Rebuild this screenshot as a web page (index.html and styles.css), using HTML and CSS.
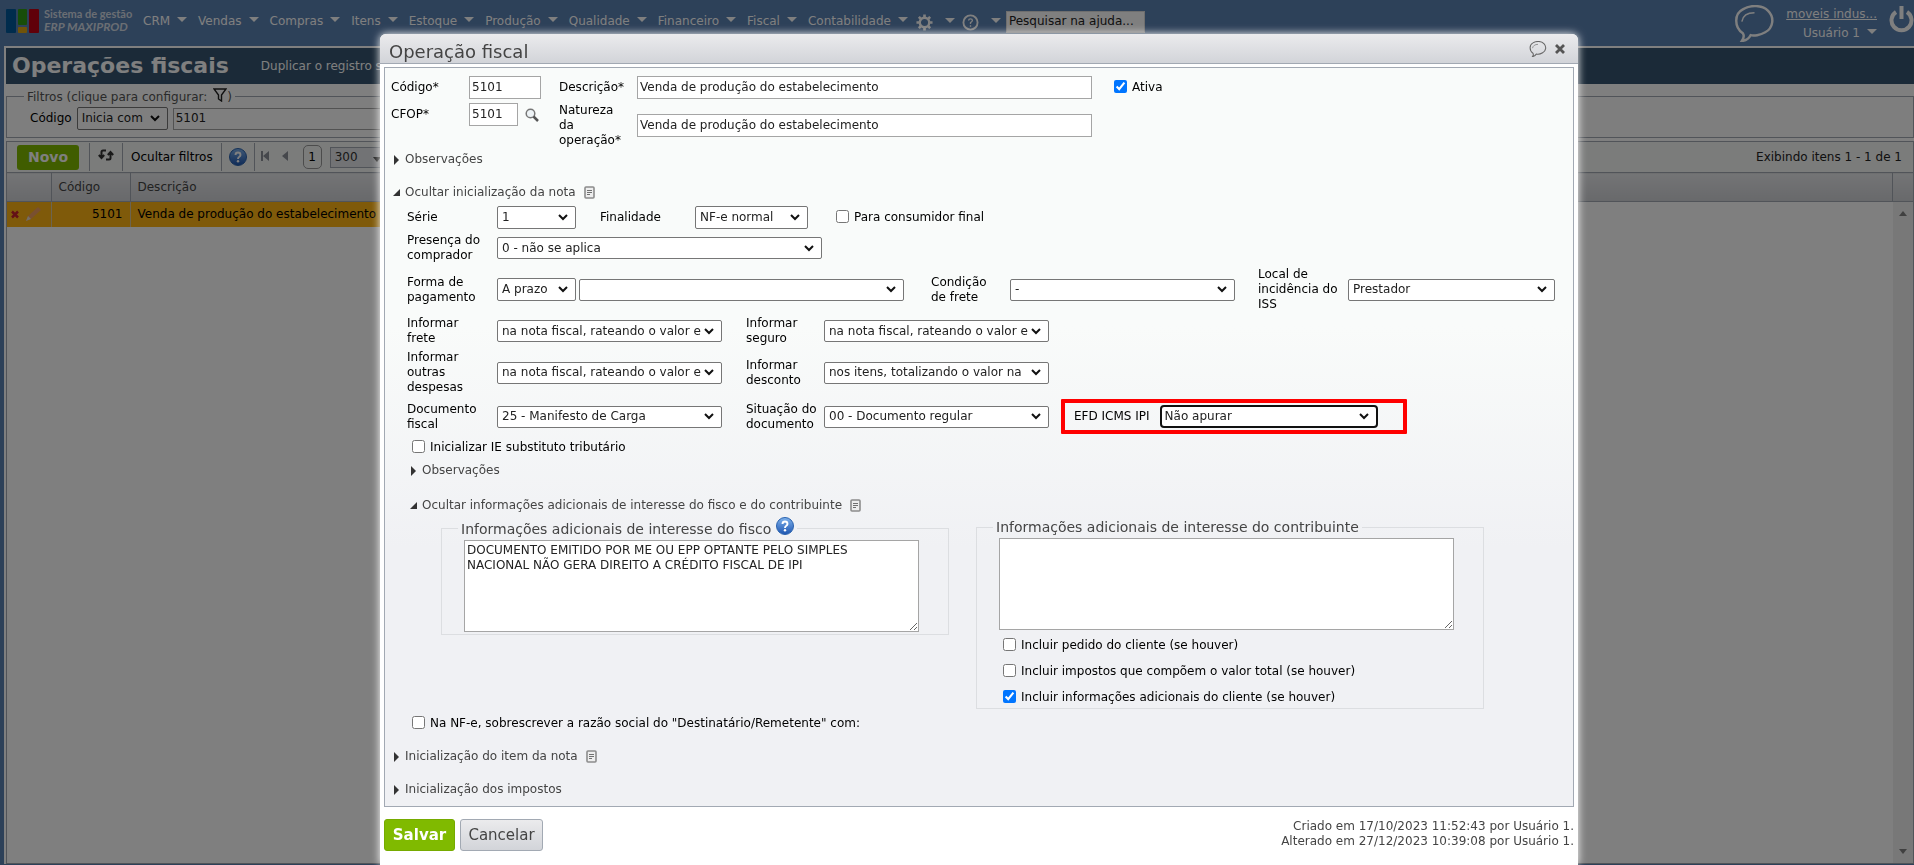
FILE: index.html
```html
<!DOCTYPE html>
<html lang="pt-BR">
<head>
    <meta charset="UTF-8">
    <meta name="viewport" content="width=device-width, initial-scale=1.0">
    <title>Operações fiscais</title>
    <link rel="stylesheet" href="styles.css">
</head>
<body>

    <svg width="0" height="0" class="sprite">
        <symbol id="note" viewBox="0 0 11 13">
            <rect x="1" y="1" width="9" height="11" rx="1" fill="#eee" stroke="#8c8c8c" stroke-width="1.6"/>
            <path d="M3 4.500h5M3 6.500h5M3 8.500h3" stroke="#707070"/>
        </symbol>
        <symbol id="bubble" viewBox="0 0 40 38">
            <path d="M8 29C-1 23-1 9 8 4.500C16-.5 28 0 34 6C41 13 39 24 31 28C26 31 19 32 16 31C14 35 11 36.500 7 37C9 34 9.500 31 8 29Z" fill="none" stroke="currentColor" stroke-width="2.500"/>
            <path d="M7 17C8 11 13 8 20 8" fill="none" stroke="currentColor" stroke-width="1.500"/>
        </symbol>
        <symbol id="help" viewBox="0 0 18 18">
            <circle cx="9" cy="9" r="8.500" fill="url(#ball)" stroke="#2a62ae"/>
            <path d="M6.500 7Q6.500 4.500 9 4.500T11.500 7Q11.500 8 10 9Q9 9.600 9 11" fill="none" stroke="#fff" stroke-width="1.900"/>
            <circle cx="9" cy="13.300" r="1.200" fill="#fff"/>
        </symbol>
        <linearGradient id="ball" x1="0" y1="0" x2="0" y2="1">
            <stop offset="0" stop-color="#7fb2ec"/>
            <stop offset="1" stop-color="#1d55b0"/>
        </linearGradient>
    </svg>

    <header class="navbar">
        <svg class="logo" width="34" height="26" viewBox="0 0 34 26">
            <rect x="0" y="1" width="10" height="24" rx="1" fill="#00589a"/>
            <rect x="12" y="1" width="9" height="16" rx="1" fill="#2f9a12"/>
            <rect x="12" y="19" width="9" height="6" rx="1" fill="#e0a612"/>
            <rect x="23" y="1" width="10" height="24" rx="1" fill="#c00012"/>
        </svg>
        <div class="brand">Sistema de gestão<br><em>ERP MAXIPROD</em></div>
        <nav class="menu">
            <a href="#">CRM</a>
            <a href="#">Vendas</a>
            <a href="#">Compras</a>
            <a href="#">Itens</a>
            <a href="#">Estoque</a>
            <a href="#">Produção</a>
            <a href="#">Qualidade</a>
            <a href="#">Financeiro</a>
            <a href="#">Fiscal</a>
            <a href="#">Contabilidade</a>
            <a href="#" class="icon" aria-label="Configurações">
                <svg width="17" height="17" viewBox="0 0 18 18" fill="none" stroke="currentColor">
                    <circle cx="9" cy="9" r="5" stroke-width="2.500"/>
                    <path d="M9 .5v3M9 14.500v3M.5 9h3M14.500 9h3M3 3l2 2M13 13l2 2M15 3l-2 2M5 13l-2 2" stroke-width="2.800"/>
                </svg>
            </a>
            <a href="#" class="icon" aria-label="Ajuda">
                <svg width="17" height="17" viewBox="0 0 18 18" fill="none" stroke="currentColor">
                    <circle cx="9" cy="9" r="7.500" stroke-width="2"/>
                    <path d="M7 7Q7 5.200 9 5.200T11 7Q11 8 9 9.200V10.500M9 12v1.500" stroke-width="1.400"/>
                </svg>
            </a>
        </nav>
        <input class="search" type="text" value="Pesquisar na ajuda..." aria-label="Pesquisar na ajuda">
        <div class="account">
            <svg width="39" height="37"><use href="#bubble"/></svg>
            <div class="user">
                <a href="#" class="company">moveis indus...</a>
                <a href="#" class="name">Usuário 1</a>
            </div>
            <svg width="25" height="28" viewBox="0 0 25 28" fill="none" stroke="currentColor" stroke-width="4">
                <path d="M7 7A10 10 0 1 0 18 7M12.500 1V14"/>
            </svg>
        </div>
    </header>

    <main class="page">
        <div class="titlebar">
            <h1>Operações fiscais</h1>
            <a href="#">Duplicar o registro selecionado</a>
        </div>

        <fieldset class="filters">
            <legend>Filtros (clique para configurar:
                <svg width="14" height="14" viewBox="0 0 14 14"><path d="M1 1h12L8.500 7v6L5.500 11V7Z" fill="none" stroke="#222" stroke-width="1.400"/></svg>)
            </legend>
            <label for="filter-op">Código</label>
            <select id="filter-op"><option>Inicia com</option></select>
            <input type="text" value="5101" aria-label="Código">
        </fieldset>

        <section class="list">
            <div class="toolbar">
                <button type="button" class="new">Novo</button>
                <button type="button" class="tool" aria-label="Atualizar">
                    <svg width="16" height="12" viewBox="0 0 16 12" fill="none" stroke="#333" stroke-width="2">
                        <path d="M8 1.500H5Q3.500 1.500 3.500 3V9M8 10.500H11Q12.500 10.500 12.500 9V3M.8 6L3.500 9L6.200 6M9.800 6L12.500 3L15.200 6"/>
                    </svg>
                </button>
                <button type="button" class="tool">Ocultar filtros</button>
                <button type="button" class="tool help" aria-label="Ajuda"><svg width="18" height="18"><use href="#help"/></svg></button>
                <button type="button" class="pager" aria-label="Primeira">
                    <svg width="8" height="10" viewBox="0 0 8 10"><path d="M0 0h2v10H0ZM8 0v10L2 5Z" fill="#8c9099"/></svg>
                </button>
                <button type="button" class="pager" aria-label="Anterior">
                    <svg width="6" height="10" viewBox="0 0 6 10"><path d="M6 0v10L0 5Z" fill="#8c9099"/></svg>
                </button>
                <button type="button" class="current">1</button>
                <div class="page-size">300</div>
                <span class="count">Exibindo itens 1 - 1 de 1</span>
            </div>
            <table>
                <thead>
                    <tr><th class="actions"></th><th class="code">Código</th><th class="desc">Descrição</th><th></th><th class="last"></th></tr>
                </thead>
                <tbody>
                    <tr>
                        <td>
                            <svg width="34" height="16" viewBox="0 0 34 16">
                                <path d="M1 5.500l6 6M7 5.500l-6 6" stroke="#c8202c" stroke-width="2.500"/>
                                <path d="M15 15l2-5L27 1l3 3L20 13Z" fill="#f2a060"/>
                                <path d="M15 15l2-5 3 3Z" fill="#e8dccb"/>
                            </svg>
                        </td>
                        <td class="code">5101</td>
                        <td class="desc">Venda de produção do estabelecimento</td>
                    </tr>
                </tbody>
            </table>
            <div class="scroller"><span class="up"></span><span class="down"></span></div>
        </section>
    </main>

    <div class="overlay">
        <form class="dialog" role="dialog" aria-labelledby="dialog-title">
            <div class="dialog-header">
                <h2 id="dialog-title">Operação fiscal</h2>
                <button type="button" class="plain" aria-label="Comentários"><svg width="18" height="16"><use href="#bubble"/></svg></button>
                <button type="button" class="plain" aria-label="Fechar">
                    <svg width="10" height="10" viewBox="0 0 10 10"><path d="M1 1l8 8M9 1l-8 8" stroke="#555" stroke-width="2.800"/></svg>
                </button>
            </div>

            <div class="dialog-body">
                <div class="main-fields">
                    <label for="code">Código*</label>
                    <input type="text" id="code" class="w-code" value="5101">
                    <label for="desc">Descrição*</label>
                    <input type="text" id="desc" value="Venda de produção do estabelecimento">
                    <div class="check active"><input type="checkbox" id="active" checked><label for="active">Ativa</label></div>

                    <label for="cfop" class="top">CFOP*</label>
                    <div class="cfop top">
                        <input type="text" id="cfop" value="5101">
                        <svg width="14" height="14" viewBox="0 0 14 14" fill="none" stroke="#777">
                            <circle cx="5.500" cy="5.500" r="4.300" fill="#eef3f6" stroke-width="1.500"/>
                            <path d="M8.500 8.500L13 13" stroke="#555" stroke-width="2.500"/>
                        </svg>
                    </div>
                    <label for="nature">Natureza<br>da<br>operação*</label>
                    <input type="text" id="nature" value="Venda de produção do estabelecimento">
                </div>

                <button type="button" class="toggle">Observações</button>
                <button type="button" class="toggle open">Ocultar inicialização da nota<svg width="11" height="13"><use href="#note"/></svg></button>

                <div class="rows">
                    <div class="row">
                        <label for="serie" class="l-first">Série</label>
                        <select id="serie" class="w-small"><option>1</option></select>
                        <label for="purpose" class="l-purpose">Finalidade</label>
                        <select id="purpose" class="w-purpose"><option>NF-e normal</option></select>
                        <div class="check final"><input type="checkbox" id="final"><label for="final">Para consumidor final</label></div>
                    </div>
                    <div class="row">
                        <label for="presence" class="l-first">Presença do comprador</label>
                        <select id="presence" class="w-wide"><option>0 - não se aplica</option></select>
                    </div>
                    <div class="row">
                        <label for="payment" class="l-first">Forma de pagamento</label>
                        <select id="payment" class="w-small"><option>A prazo</option></select>
                        <select class="w-wide second" aria-label="Condição de pagamento"><option></option></select>
                        <label for="freight-cond" class="l-cond">Condição de frete</label>
                        <select id="freight-cond" class="w-mid"><option>-</option></select>
                        <label for="iss" class="l-iss">Local de incidência do ISS</label>
                        <select id="iss" class="w-iss"><option>Prestador</option></select>
                    </div>
                    <div class="row">
                        <label for="freight" class="l-first">Informar frete</label>
                        <select id="freight" class="w-mid"><option>na nota fiscal, rateando o valor entre os itens</option></select>
                        <label for="insurance" class="l-mid">Informar seguro</label>
                        <select id="insurance" class="w-mid"><option>na nota fiscal, rateando o valor entre os itens</option></select>
                    </div>
                    <div class="row">
                        <label for="other" class="l-first">Informar outras despesas</label>
                        <select id="other" class="w-mid"><option>na nota fiscal, rateando o valor entre os itens</option></select>
                        <label for="discount" class="l-mid">Informar desconto</label>
                        <select id="discount" class="w-mid"><option>nos itens, totalizando o valor na</option></select>
                    </div>
                    <div class="row">
                        <label for="doc" class="l-first">Documento fiscal</label>
                        <select id="doc" class="w-mid"><option>25 - Manifesto de Carga</option></select>
                        <label for="status" class="l-mid">Situação do documento</label>
                        <select id="status" class="w-mid"><option>00 - Documento regular</option></select>
                        <div class="highlight">
                            <label for="efd">EFD ICMS IPI</label>
                            <select id="efd"><option>Não apurar</option></select>
                        </div>
                    </div>
                </div>

                <div class="nested">
                    <div class="check"><input type="checkbox" id="ie"><label for="ie">Inicializar IE substituto tributário</label></div>
                    <button type="button" class="toggle">Observações</button>
                    <button type="button" class="toggle open">Ocultar informações adicionais de interesse do fisco e do contribuinte<svg width="11" height="13"><use href="#note"/></svg></button>

                    <div class="infos">
                        <fieldset>
                            <legend>Informações adicionais de interesse do fisco <svg width="18" height="18"><use href="#help"/></svg></legend>
                            <textarea aria-label="Informações adicionais de interesse do fisco">DOCUMENTO EMITIDO POR ME OU EPP OPTANTE PELO SIMPLES
NACIONAL NÃO GERA DIREITO A CRÉDITO FISCAL DE IPI</textarea>
                        </fieldset>
                        <fieldset>
                            <legend>Informações adicionais de interesse do contribuinte</legend>
                            <textarea aria-label="Informações adicionais de interesse do contribuinte"></textarea>
                            <div class="check"><input type="checkbox" id="order"><label for="order">Incluir pedido do cliente (se houver)</label></div>
                            <div class="check"><input type="checkbox" id="taxes"><label for="taxes">Incluir impostos que compõem o valor total (se houver)</label></div>
                            <div class="check"><input type="checkbox" id="client" checked><label for="client">Incluir informações adicionais do cliente (se houver)</label></div>
                        </fieldset>
                    </div>

                    <div class="check"><input type="checkbox" id="override"><label for="override">Na NF-e, sobrescrever a razão social do "Destinatário/Remetente" com:</label></div>
                </div>

                <button type="button" class="toggle">Inicialização do item da nota<svg width="11" height="13"><use href="#note"/></svg></button>
                <button type="button" class="toggle">Inicialização dos impostos</button>
            </div>

            <div class="dialog-footer">
                <button type="submit" class="save">Salvar</button>
                <button type="button" class="cancel">Cancelar</button>
                <p>Criado em 17/10/2023 11:52:43 por Usuário 1.<br>Alterado em 27/12/2023 10:39:08 por Usuário 1.</p>
            </div>
        </form>
    </div>

</body>
</html>
```
FILE: styles.css
```css
* {
    box-sizing: border-box;
}
body, input, select, textarea, button {
    font-family: "DejaVu Sans", Verdana, sans-serif;
    font-size: 12px;
    line-height: 15px;
}
body {
    margin: 0;
    height: 100vh;
    overflow: hidden;
    display: flex;
    flex-direction: column;
    background: #5b82b2;
    color: #000;
}
a {
    color: inherit;
    text-decoration: none;
}
svg {
    flex: none;
}
button {
    cursor: pointer;
}
input[type="text"], textarea {
    margin: 0;
    padding: 0 2px 2px;
    border: 1px solid #a5a5a5;
    background: #fff;
    color: #222;
}
select {
    height: 22px;
    padding: 0 20px 0 4px;
    appearance: none;
    border: 1px solid #767676;
    border-radius: 2px;
    background: #fff url("data:image/svg+xml,%3Csvg xmlns='http://www.w3.org/2000/svg' width='10' height='7' fill='none' stroke='%23111' stroke-width='2'%3E%3Cpath d='M1 1l4 4 4-4'/%3E%3C/svg%3E") no-repeat right 7px center;
    color: #222;
}
input[type="checkbox"] {
    width: 13px;
    height: 13px;
    margin: 0 5px 2px 0;
}
.sprite {
    position: absolute;
}

/* top bar */
.navbar {
    display: flex;
    align-items: flex-start;
    height: 46px;
    flex: none;
    padding-left: 6px;
    color: #fff;
}
.logo {
    margin-top: 8px;
}
.brand {
    font-family: Lato, sans-serif;
    font-weight: bold;
    font-size: 11px;
    line-height: 13px;
    width: 99px;
    margin: 7px 0 0 4px;
    color: #d5dce6;
    white-space: nowrap;
}
.brand em {
    font-size: 12px;
}
.menu {
    display: flex;
    gap: 11px;
    padding-top: 14px;
}
.menu a::after, .name::after {
    content: "";
    display: inline-block;
    margin-left: 7px;
    vertical-align: 3px;
    border: 5px solid transparent;
    border-top-color: #fff;
    border-bottom: 0;
}
.menu .icon {
    display: flex;
    margin: 0 -1px 0 -3px;
}
.menu .icon::after {
    margin: 4px 0 0 12px;
}
.navbar .search {
    width: 139px;
    height: 22px;
    margin: 11px 0 0 6px;
    border: 1px solid #ddd;
}
.account {
    display: flex;
    margin-left: auto;
    gap: 12px;
    padding-top: 5px;
}
.user {
    display: flex;
    flex-direction: column;
    align-items: flex-end;
    gap: 4px;
    padding-top: 2px;
}
.company {
    text-decoration: underline;
}

/* page behind the dialog */
.page {
    flex: 1;
    display: flex;
    flex-direction: column;
    margin: 0 0 1px 4px;
    border: 2px solid #fff;
    border-width: 2px 0 0 2px;
    background: #fff;
}
.titlebar {
    display: flex;
    align-items: center;
    gap: 32px;
    height: 36px;
    padding-left: 6px;
    background: #365470;
    color: #fff;
}
.titlebar h1 {
    margin: 0;
    font-size: 22px;
    line-height: 30px;
}
.filters {
    display: flex;
    align-items: center;
    height: 50px;
    margin: 4px 0 3px;
    padding: 2px 0 0 23px;
    border: 1px solid #a2a9b3;
    background: #fcfdfc;
}
.filters legend {
    margin-left: -6px;
    padding: 0 3px;
    color: #555;
}
.filters legend svg {
    vertical-align: -1px;
    margin-left: 2px;
}
.filters select {
    width: 91px;
    height: 23px;
    margin: 0 5px;
}
.filters input {
    width: 400px;
    height: 22px;
}
.list {
    flex: 1;
    position: relative;
    border: 1px solid #a2a9b3;
}
.toolbar {
    display: flex;
    align-items: center;
    height: 30px;
    padding-left: 10px;
    background: #f6f8f7;
}
.toolbar button {
    padding: 0;
    border: 0;
    background: none;
}
.toolbar .new {
    width: 62px;
    height: 25px;
    margin-right: 10px;
    border-radius: 3px;
    background: #80ba00;
    color: #fff;
    font-size: 14px;
    font-weight: bold;
}
.toolbar .tool {
    height: 28px;
    padding: 0 8px;
    border-left: 1px solid #a2a9b3;
}
.toolbar .help {
    padding: 4px 7px 0;
    border-right: 1px solid #a2a9b3;
}
.toolbar .pager {
    margin: 0 7px 0 6px;
}
.toolbar .current {
    width: 19px;
    height: 24px;
    margin: 0 8px;
    border: 1px solid #999;
    border-radius: 5px;
}
.page-size {
    display: flex;
    width: 56px;
    height: 21px;
    padding: 2px 4px;
    border: 1px solid #a2a9b3;
    background: #e4e6ea;
    color: #333;
}
.page-size::after {
    content: "";
    margin: 7px 0 0 auto;
    border: 4px solid transparent;
    border-top: 5px solid #333;
    border-bottom: 0;
}
.count {
    margin-left: auto;
    padding-right: 11px;
    color: #222;
}
table {
    width: 100%;
    border-collapse: collapse;
    table-layout: fixed;
}
th {
    height: 29px;
    padding: 0 7px;
    border: 1px solid #a2a9b3;
    border-left: 0;
    background: linear-gradient(#e8e9ec, #d0d2d6);
    color: #444;
    font-weight: normal;
    text-align: left;
}
td {
    height: 25px;
    padding: 0 7px;
    border-right: 1px solid #d8c8a0;
    background: #ffb414;
}
td:first-child {
    padding: 0 4px;
}
td svg {
    display: block;
}
.actions {
    width: 44px;
}
.code {
    width: 79px;
    text-align: right;
}
th.code {
    text-align: left;
}
.desc {
    width: 600px;
}
th.desc {
    border-right: 0;
}
.last {
    width: 21px;
    padding: 0;
    border-right: 0;
}
.scroller {
    position: absolute;
    top: 60px;
    right: 0;
    bottom: 0;
    width: 20px;
    display: flex;
    flex-direction: column;
    justify-content: space-between;
    align-items: center;
    padding: 9px 0;
    background: #f1f1f1;
}
.up, .down {
    border: 4px solid transparent;
    border-bottom: 5px solid #808080;
    border-top: 0;
}
.down {
    border-top: 5px solid #808080;
    border-bottom: 0;
}

/* dialog */
.overlay {
    position: fixed;
    inset: 0;
    overflow: hidden;
    padding: 34px 336px 0 380px;
    background: rgba(0, 0, 0, 0.5);
}
.dialog {
    min-height: 100%;
    border-radius: 6px 6px 0 0;
    background: #fff;
    box-shadow: 0 0 8px #fff;
}
.dialog-header {
    display: flex;
    align-items: center;
    gap: 8px;
    height: 30px;
    padding: 0 13px 0 9px;
    border-bottom: 1px solid #a2a9b3;
    border-radius: 6px 6px 0 0;
    background: linear-gradient(#ebebed, #d2d4d9);
}
.dialog-header h2 {
    flex: 1;
    margin: 0;
    padding-top: 6px;
    font-size: 18px;
    line-height: 24px;
    font-weight: normal;
    color: #444;
}
.plain {
    display: flex;
    padding: 0;
    border: 0;
    background: none;
    color: #666;
}
.dialog-body {
    margin: 3px 4px 0;
    padding: 8px 6px 9px;
    border: 1px solid #a2a9b3;
    background: linear-gradient(#f9fbfa 35%, #f0f1f4 65%);
}
.main-fields {
    display: grid;
    grid-template-columns: 78px 90px 78px 455px 1fr;
    gap: 4px 0;
    align-items: center;
}
.main-fields input[type="text"] {
    height: 23px;
}
.main-fields .w-code {
    width: 72px;
}
.main-fields .top {
    align-self: start;
}
label.top {
    padding-top: 4px;
}
.cfop {
    display: flex;
    align-items: center;
    gap: 7px;
}
.cfop input {
    width: 49px;
}
.check {
    display: flex;
    align-items: center;
}
.active {
    margin-left: 22px;
}
.toggle {
    display: flex;
    align-items: center;
    height: 15px;
    margin: 0 0 0 3px;
    padding: 0;
    border: 0;
    background: none;
    color: #444;
}
.toggle::before {
    content: "";
    margin-right: 6px;
    border: 5px solid transparent;
    border-left: 5px solid #333;
    border-right: 0;
}
.toggle.open::before {
    margin-right: 5px;
    margin-left: -1px;
    border: 0;
    border-left: 7px solid transparent;
    border-bottom: 7px solid #333;
}
.toggle svg {
    margin-left: 8px;
}
.dialog-body > .toggle {
    margin-top: 18px;
}
.main-fields + .toggle {
    margin-top: 4px;
}
.rows {
    display: flex;
    flex-direction: column;
    gap: 4px;
    margin: 6px 0 0 16px;
}
.row {
    display: flex;
    align-items: center;
}
.row > * {
    flex: none;
}
.l-first {
    width: 90px;
    padding-right: 12px;
}
.w-small {
    width: 79px;
    height: 23px;
}
.l-purpose {
    width: 119px;
    padding-left: 24px;
}
.w-purpose {
    width: 113px;
    height: 23px;
}
.final {
    margin-left: 28px;
}
.w-wide {
    width: 325px;
}
.second {
    margin-left: 3px;
}
.l-cond {
    width: 106px;
    padding: 0 20px 0 27px;
}
.w-mid {
    width: 225px;
}
.l-iss {
    width: 113px;
    padding-left: 23px;
}
.w-iss {
    width: 207px;
}
.l-mid {
    width: 102px;
    padding-left: 24px;
}
.highlight {
    display: flex;
    align-items: center;
    gap: 10px;
    width: 346px;
    height: 35px;
    margin-left: 12px;
    padding-left: 9px;
    border: 4px solid #f00;
    border-radius: 1px;
}
.highlight select {
    width: 218px;
    height: 23px;
    padding-left: 3px;
    border: 2px solid #111;
    border-radius: 4px;
}
.nested {
    margin: 6px 0 0 18px;
}
.nested > .check {
    margin-left: 3px;
}
.nested > .toggle {
    margin-top: 8px;
    margin-left: 2px;
}
.nested > .toggle.open {
    margin-top: 20px;
}
.infos {
    display: flex;
    align-items: flex-start;
    gap: 27px;
    margin: 4px 0 7px 32px;
}
.infos fieldset {
    width: 508px;
    margin: 0;
    padding: 1px 0 2px 22px;
    border: 1px solid #dcdee1;
}
.infos legend {
    margin-left: -6px;
    padding: 0 3px;
    color: #444;
    font-size: 14px;
    line-height: 20px;
}
.infos legend svg {
    vertical-align: -1px;
}
.infos textarea {
    display: block;
    width: 455px;
    height: 92px;
    padding-top: 2px;
}
.infos .check {
    margin: 8px 0 0 4px;
    height: 18px;
}
.infos textarea + .check {
    margin-top: 6px;
}
.dialog-footer {
    display: flex;
    align-items: flex-start;
    gap: 5px;
    padding: 12px 4px 0;
}
.dialog-footer button {
    height: 32px;
    padding: 0;
    border: 1px solid #a2a9b3;
    border-radius: 3px;
    font-size: 15px;
    color: #444;
    background: linear-gradient(#ebebed, #d2d4d9);
}
.dialog-footer .save {
    width: 71px;
    border-color: #76ab00;
    background: #80ba00;
    color: #fff;
    font-weight: bold;
}
.dialog-footer .cancel {
    width: 83px;
}
.dialog-footer p {
    margin: 0 0 0 auto;
    text-align: right;
    color: #444;
}
```
